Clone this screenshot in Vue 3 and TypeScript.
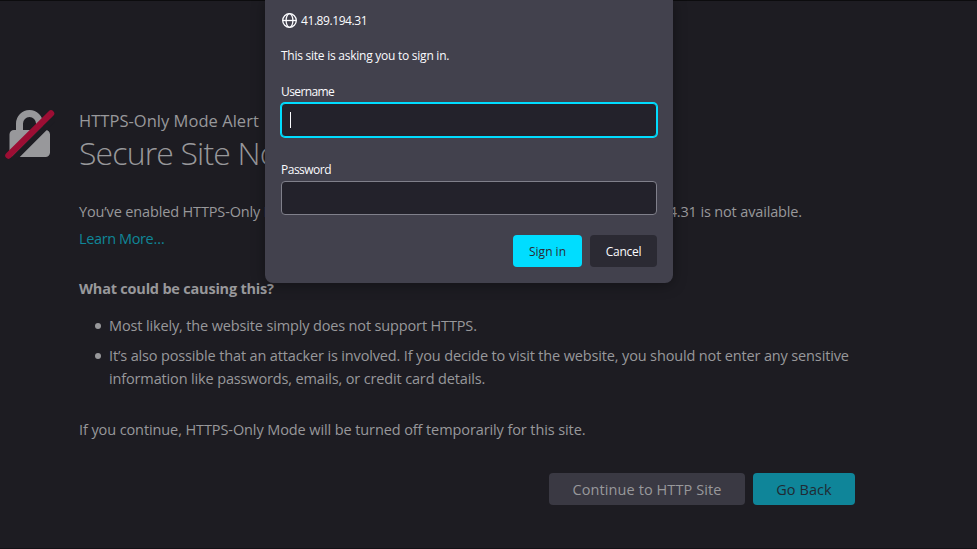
<script setup lang="ts">
import { onMounted, ref } from 'vue'

const host = '41.89.194.31'
const username = ref('')
const password = ref('')
const usernameField = ref<HTMLInputElement | null>(null)
const causes: string[][] = [
  ['Most likely, the website simply does not support HTTPS.'],
  [
    'It’s also possible that an attacker is involved. If you decide to visit the website, you should not enter any sensitive',
    'information like passwords, emails, or credit card details.',
  ],
]

onMounted(() => usernameField.value?.focus())
</script>

<template>
  <div class="window">
    <main class="page">
      <svg class="lock" width="50" height="50" viewBox="0 0 50 50" aria-hidden="true">
        <path class="shackle" d="M14.500 24V13.500a10 10 0 0 1 20 0V24" />
        <path class="body" d="M9 20h31.500a4.500 4.500 0 0 1 4.500 4.500v18a4.500 4.500 0 0 1-4.500 4.500H9a4.500 4.500 0 0 1-4.500-4.500v-18A4.500 4.500 0 0 1 9 20z" />
        <path class="gap" d="M7.500 50L50 7.500" />
        <path class="slash" d="M3.500 45.500L46 3.500" />
      </svg>
      <section class="content">
        <p class="kicker">HTTPS-Only Mode Alert</p>
        <h1>Secure Site Not Available</h1>
        <p class="intro">You’ve enabled HTTPS-Only Mode for enhanced security, and a HTTPS version of {{ host }} is not available.</p>
        <a class="learn">Learn More…</a>
        <h2>What could be causing this?</h2>
        <ul>
          <li v-for="(lines, i) in causes" :key="i">
            <span v-for="line in lines" :key="line" class="line">{{ line }}</span>
          </li>
        </ul>
        <p class="note">If you continue, HTTPS-Only Mode will be turned off temporarily for this site.</p>
        <div class="actions">
          <button class="continue">Continue to HTTP Site</button>
          <button class="back">Go Back</button>
        </div>
      </section>
    </main>

    <form class="dialog" @submit.prevent>
      <header>
        <svg width="16" height="16" viewBox="0 0 16 16" aria-hidden="true">
          <circle cx="8.500" cy="8.500" r="6.800" />
          <ellipse cx="8.500" cy="8.500" rx="3.400" ry="6.800" />
          <path d="M1.500 8.500h14" />
        </svg>
        <span>{{ host }}</span>
      </header>
      <p class="message">This site is asking you to sign in.</p>
      <label for="user" class="first">Username</label>
      <div class="field focused">
        <input id="user" ref="usernameField" v-model="username" type="text" autocomplete="off" />
        <i class="caret"></i>
      </div>
      <label for="pass" class="second">Password</label>
      <div class="field">
        <input id="pass" v-model="password" type="password" />
      </div>
      <footer>
        <button class="signin" type="submit">Sign in</button>
        <button class="cancel" type="button">Cancel</button>
      </footer>
    </form>
  </div>
</template>

<style>
body {
  margin: 0;
  background: #1d1c22;
}
</style>

<style scoped>
.window {
  position: relative;
  height: 549px;
  overflow: hidden;
  background: #1d1c22;
  box-shadow: inset 0 1px #0c0c0e, inset 0 -1px #131217;
  color: #98989b;
  font: 14.5px/23px "Open Sans", "Noto Sans", sans-serif;
  letter-spacing: -0.145px;
}
p, h1, h2, ul {
  margin: 0;
  padding: 0;
}
.page {
  display: flex;
  gap: 24px;
  padding: 110px 0 0 5px;
  white-space: nowrap;
}
.lock {
  flex: none;
}
.shackle {
  fill: none;
  stroke: #98989b;
  stroke-width: 7;
}
.body {
  fill: #98989b;
}
.gap {
  stroke: #1d1c22;
  stroke-width: 6;
}
.slash {
  stroke: #9c0e34;
  stroke-width: 6.5;
  stroke-linecap: round;
}
.content {
  width: 776px;
}
.kicker {
  font-size: 16.5px;
  line-height: 22px;
  letter-spacing: 0.03px;
}
h1 {
  font-size: 32px;
  font-weight: 300;
  line-height: 41px;
  letter-spacing: -0.85px;
}
.intro {
  margin-top: 27px;
}
.learn {
  display: block;
  margin-top: 4px;
  color: #0f8698;
  letter-spacing: -0.38px;
}
h2 {
  margin-top: 27px;
  font-size: 14.5px;
  font-weight: 700;
  line-height: 23px;
  letter-spacing: -0.21px;
}
ul {
  margin-top: 14px;
  padding-left: 30px;
  list-style: none;
}
li {
  position: relative;
}
li::before {
  content: "";
  position: absolute;
  left: -14px;
  top: 9px;
  width: 6px;
  height: 6px;
  border-radius: 50%;
  background: #98989b;
}
li + li {
  margin-top: 7px;
}
.line {
  display: block;
}
.note {
  margin-top: 28px;
  letter-spacing: -0.1px;
}
.actions {
  display: flex;
  justify-content: flex-end;
  gap: 8px;
  margin-top: 32px;
}
button {
  height: 32px;
  padding: 0;
  border: 0;
  border-radius: 4px;
  font-family: inherit;
  white-space: nowrap;
}
.actions button {
  font-size: 14.5px;
  letter-spacing: 0.09px;
}
.continue {
  width: 196px;
  background: #3a3943;
  color: #98989b;
}
.back {
  width: 102px;
  background: #0f8599;
  color: #202a33;
}
.dialog {
  position: absolute;
  top: 0;
  left: 265px;
  box-sizing: border-box;
  width: 408px;
  height: 283px;
  padding: 12px 16px 0;
  border-radius: 0 0 8px 8px;
  background: #42414d;
  box-shadow: 0 2px 14px rgba(0, 0, 0, 0.35);
  color: #fbfbfe;
  font-size: 12px;
  line-height: 16px;
  letter-spacing: -0.25px;
}
header {
  display: flex;
  gap: 4px;
  height: 16px;
  letter-spacing: -0.42px;
}
header svg {
  overflow: visible;
  fill: none;
  stroke: #fbfbfe;
  stroke-width: 1.3;
}
header span {
  padding-top: 1px;
}
.message {
  margin-top: 20px;
}
label {
  display: block;
}
.first {
  margin-top: 20px;
  letter-spacing: -0.6px;
}
.second {
  margin-top: 25px;
  letter-spacing: -0.5px;
}
.field {
  position: relative;
  display: flex;
  box-sizing: border-box;
  height: 34px;
  margin-top: 3px;
  border: 1px solid #80808b;
  border-radius: 4px;
  background: #23222b;
}
.focused {
  border-color: #00ddff;
  box-shadow: 0 0 0 1px #00ddff;
}
input {
  flex: 1;
  min-width: 0;
  padding: 0 8px;
  border: 0;
  outline: 0;
  background: transparent;
  color: inherit;
  caret-color: transparent;
  font: inherit;
}
.caret {
  position: absolute;
  left: 8px;
  top: 8px;
  width: 1px;
  height: 16px;
  background: #fbfbfe;
}
footer {
  display: flex;
  justify-content: flex-end;
  gap: 8px;
  margin-top: 20px;
}
footer button {
  font-size: 12px;
}
.signin {
  width: 69px;
  background: #00ddff;
  color: #2b2a33;
}
.cancel {
  width: 67px;
  background: #2b2a33;
  color: #fbfbfe;
  letter-spacing: -0.25px;
}
</style>
